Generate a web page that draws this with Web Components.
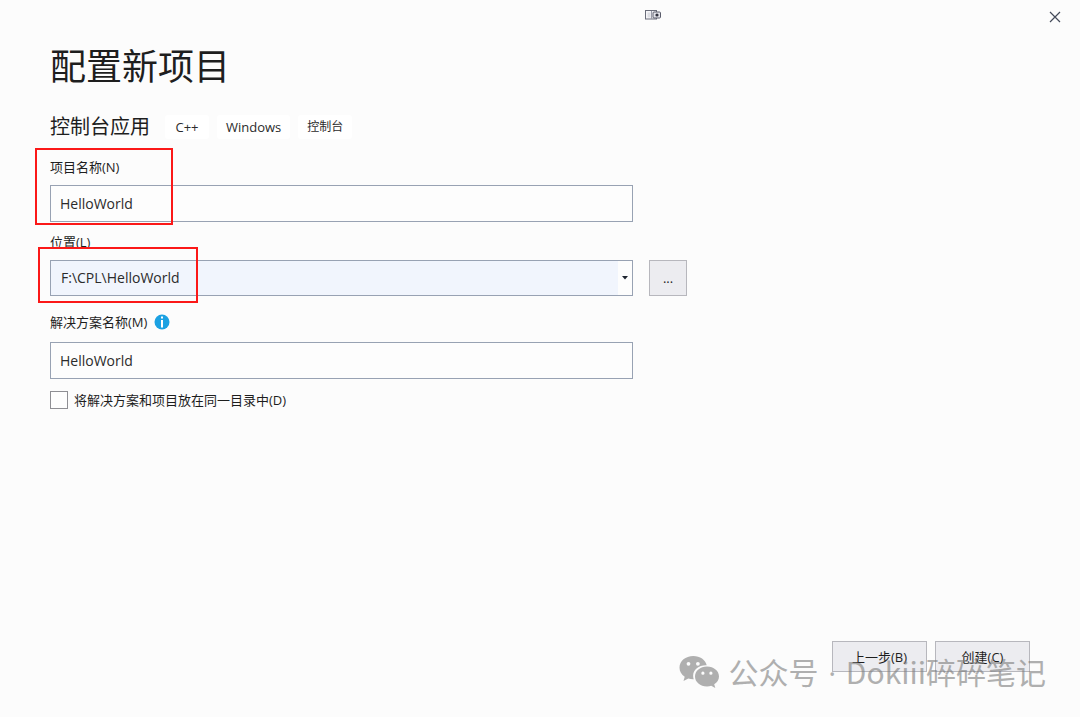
<!DOCTYPE html>
<html lang="zh-CN">
<head>
<meta charset="utf-8">
<meta name="viewport" content="width=device-width, initial-scale=1">
<title>配置新项目</title>
<style>
    body {
        margin: 0;
        background: #fcfcfc;
        color: #1e1e1e;
        font: 13px/20px "Open Sans", "Noto Sans CJK SC", sans-serif;
    }
</style>
</head>
<body>
<project-dialog></project-dialog>

<script>
// small helper so every element gets an open root with its own styles
class BaseElement extends HTMLElement {
    constructor() {
        super();
        this.attachShadow({ mode: 'open' });
    }

    connectedCallback() {
        this.shadowRoot.innerHTML = this.template();
    }

    attr(name) {
        return this.getAttribute(name) || '';
    }
}

class WindowBar extends BaseElement {
    template() {
        return `
        <style>
            :host { display: grid; grid-template-columns: 1fr auto 1fr; align-items: center; height: 33px; }
            .dock { grid-column: 2; margin: 0 0 3px 226px; width: 16px; height: 10px; }
            button { justify-self: end; display: flex; padding: 10px; margin-right: 9px; border: 0; background: none; color: #444b5a; }
            svg { display: block; }
        </style>
        <svg class="dock" viewBox="0 0 16 10">
            <rect x=".5" y=".5" width="11" height="8.5" fill="#f5f5f8" stroke="#6a6d7a"/>
            <path d="M2.5 2.5h3v5h-3z" fill="#dcdde3"/>
            <path d="M6.5 1v8" stroke="#9a9ca8"/>
            <rect x="8" y="2" width="7.5" height="6" rx="1" fill="#e4e4ea" stroke="#5a5d6b"/>
            <circle cx="12" cy="5" r="1.6" fill="#30323f"/>
        </svg>
        <button type="button" aria-label="关闭">
            <svg width="12" height="12" viewBox="0 0 12 12"><path d="M1 1l10 10M11 1L1 11" stroke="currentColor" stroke-width="1.2"/></svg>
        </button>
        `;
    }
}

class TagChip extends BaseElement {
    template() {
        return `
        <style>
            :host {
                display: block; box-sizing: border-box; min-width: 44px; padding: 2px 9px; border-radius: 3px;
                background: #fff; color: #2b2b2b; text-align: center;
            }
            :host(:lang(zh)) { font-size: 12px; }
        </style>
        <slot></slot>
        `;
    }
}

class InfoIcon extends BaseElement {
    template() {
        return `
        <style>
            :host { display: block; }
            svg { display: block; }
        </style>
        <svg width="16" height="16" viewBox="0 0 16 16">
            <circle cx="8" cy="8" r="7.5" fill="#1ba1e2"/>
            <path d="M7 2.5h2v2H7zM7 6h2v7.5H7z" fill="#fff"/>
        </svg>
        `;
    }
}

// label on top, text box below; the slot takes an icon next to the label
class TextField extends BaseElement {
    template() {
        return `
        <style>
            :host { display: block; position: relative; }
            .head { display: flex; align-items: center; gap: 7px; margin-bottom: var(--label-gap, 8px); }
            input {
                display: block; box-sizing: border-box; width: 100%; height: 37px; padding: 0 9px;
                border: 1px solid #98a2b3; border-radius: 0; background: #fdfdfd;
                font: inherit; font-size: 14px; color: #2b2b2b; outline: none;
            }
        </style>
        <div class="head"><label for="box">${this.attr('label')}</label><slot></slot></div>
        <input id="box" type="text" value="${this.attr('value')}">
        <slot name="mark"></slot>
        `;
    }
}

class PathField extends BaseElement {
    template() {
        return `
        <style>
            :host { display: block; position: relative; }
            label { display: block; margin-bottom: 8px; }
            .combo { display: grid; grid-template-columns: 1fr 14px; border: 1px solid #98a2b3; background: #fdfdfd; }
            select {
                grid-area: 1 / 1 / 2 / 3; appearance: none; width: 100%; height: 34px; padding: 0 10px; border: 0; border-radius: 0;
                background: linear-gradient(to left, #fdfdfd 14px, #f1f5fd 14px);
                font: inherit; font-size: 14px; color: #2b2b2b; outline: none;
            }
            svg { grid-area: 1 / 2; align-self: center; justify-self: center; pointer-events: none; }
        </style>
        <label for="path">${this.attr('label')}</label>
        <div class="combo">
            <select id="path"><option>${this.attr('value')}</option></select>
            <svg width="6" height="4" viewBox="0 0 6 4"><path d="M0 0h6L3 3.5z" fill="#1e2430"/></svg>
        </div>
        <slot name="mark"></slot>
        `;
    }
}

class TickBox extends BaseElement {
    template() {
        return `
        <style>
            :host { display: block; }
            label { display: flex; align-items: center; gap: 6px; }
            input { appearance: none; box-sizing: border-box; width: 18px; height: 18px; margin: 0; border: 1px solid #8f8f94; background: #fefefe; }
            input:checked { background: #1ba1e2; }
        </style>
        <label><input type="checkbox"><slot></slot></label>
        `;
    }
}

class PushButton extends BaseElement {
    template() {
        return `
        <style>
            :host { display: block; }
            button {
                display: block; box-sizing: border-box; min-width: var(--button-width, 95px); height: var(--button-height, 31px);
                padding: 0 8px; border: 1px solid #b7b7bd; border-radius: 0; background: #ececf0;
                font: inherit; color: #1e1e1e;
            }
            button:active { background: #dcdce2; }
        </style>
        <button type="button"><slot></slot></button>
        `;
    }
}

// red frame drawn over the part of a field that needs attention
class RedFrame extends BaseElement {
    template() {
        return `
        <style>
            :host { display: block; position: absolute; box-sizing: border-box; border: 2px solid #fb1818; pointer-events: none; }
        </style>
        `;
    }
}

class AccountMark extends BaseElement {
    template() {
        return `
        <style>
            :host {
                display: flex; align-items: center; gap: 8px; color: #7d7d7d; opacity: .6; white-space: nowrap;
                font: 30px/40px "Noto Sans CJK SC", sans-serif; pointer-events: none;
            }
            svg { display: block; }
        </style>
        <svg width="41" height="34" viewBox="0 0 41 34" fill="currentColor">
            <path fill-rule="evenodd" d="M14.3 1C6.6 1 .5 6.1.5 12.7c0 3.7 2 6.900 5.200 9.100L4.500 26l4.800-2.500c1.700.5 3.500.8 5.400.7-.4-1.200-.6-2.300-.6-3.400 0-5.900 5.700-10.500 12.600-10.500h1C26.500 4.900 21 1 14.300 1zM9.500 6.900a1.900 1.900 0 1 1 0 3.800 1.900 1.900 0 0 1 0-3.800zm9.400 0a1.900 1.900 0 1 1 0 3.800 1.900 1.900 0 0 1 0-3.800z"/>
            <path fill-rule="evenodd" d="M28 11.500c-6.800 0-12 4.400-12 9.900s5.200 10 12 10c1.500 0 2.900-.2 4.200-.6l4.100 2.200-1.100-3.700c2.900-1.800 4.800-4.600 4.800-7.900 0-5.500-5.300-9.900-12-9.900zm-4.100 5.100a1.600 1.600 0 1 1 0 3.200 1.600 1.600 0 0 1 0-3.200zm8 0a1.600 1.600 0 1 1 0 3.200 1.600 1.600 0 0 1 0-3.200z"/>
        </svg>
        <span><slot></slot></span>
        `;
    }
}

class ProjectDialog extends BaseElement {
    template() {
        return `
        <style>
            :host { display: flex; flex-direction: column; position: relative; box-sizing: border-box; min-height: 100vh; }
            main { padding: 10px 50px 0; }
            h1 { margin: 0 0 22px; font-size: 36px; line-height: 48px; font-weight: 400; }
            .kind { display: flex; align-items: center; gap: 8px; margin-bottom: 16px; }
            h2 { margin: 0 7px 0 0; font-size: 20px; line-height: 28px; font-weight: 400; }
            .row { display: grid; grid-template-columns: minmax(0, 583px) auto; justify-content: start; align-items: end; column-gap: 16px; }
            .place { margin: 10px 0 16px; --button-width: 38px; --button-height: 36px; }
            .solution { --label-gap: 10px; }
            tick-box { margin-top: 11px; }
            .name-mark { left: -15px; top: -9px; width: 138px; height: 77px; }
            .path-mark { left: -12px; top: 15px; width: 160px; height: 56px; }
            footer { display: flex; justify-content: flex-end; gap: 8px; margin-top: auto; padding: 24px 50px 45px; }
            account-mark { position: absolute; right: 34px; bottom: 24px; }
            .dot { padding: 0 2px; font-family: "Open Sans", sans-serif; }
        </style>
        <window-bar></window-bar>
        <main>
            <h1>配置新项目</h1>
            <div class="kind">
                <h2>控制台应用</h2>
                <tag-chip lang="en">C++</tag-chip>
                <tag-chip lang="en">Windows</tag-chip>
                <tag-chip lang="zh">控制台</tag-chip>
            </div>
            <div class="row">
                <text-field label="项目名称(N)" value="HelloWorld">
                    <red-frame slot="mark" class="name-mark"></red-frame>
                </text-field>
            </div>
            <div class="row place">
                <path-field label="位置(L)" value="F:\\CPL\\HelloWorld">
                    <red-frame slot="mark" class="path-mark"></red-frame>
                </path-field>
                <push-button>...</push-button>
            </div>
            <div class="row solution">
                <text-field label="解决方案名称(M)" value="HelloWorld"><info-icon></info-icon></text-field>
            </div>
            <tick-box>将解决方案和项目放在同一目录中(D)</tick-box>
        </main>
        <footer>
            <push-button>上一步(B)</push-button>
            <push-button>创建(C)</push-button>
        </footer>
        <account-mark>公众号<span class="dot"> · </span>Dokiii碎碎笔记</account-mark>
        `;
    }
}

customElements.define('window-bar', WindowBar);
customElements.define('tag-chip', TagChip);
customElements.define('info-icon', InfoIcon);
customElements.define('text-field', TextField);
customElements.define('path-field', PathField);
customElements.define('tick-box', TickBox);
customElements.define('push-button', PushButton);
customElements.define('red-frame', RedFrame);
customElements.define('account-mark', AccountMark);
customElements.define('project-dialog', ProjectDialog);
</script>
</body>
</html>
